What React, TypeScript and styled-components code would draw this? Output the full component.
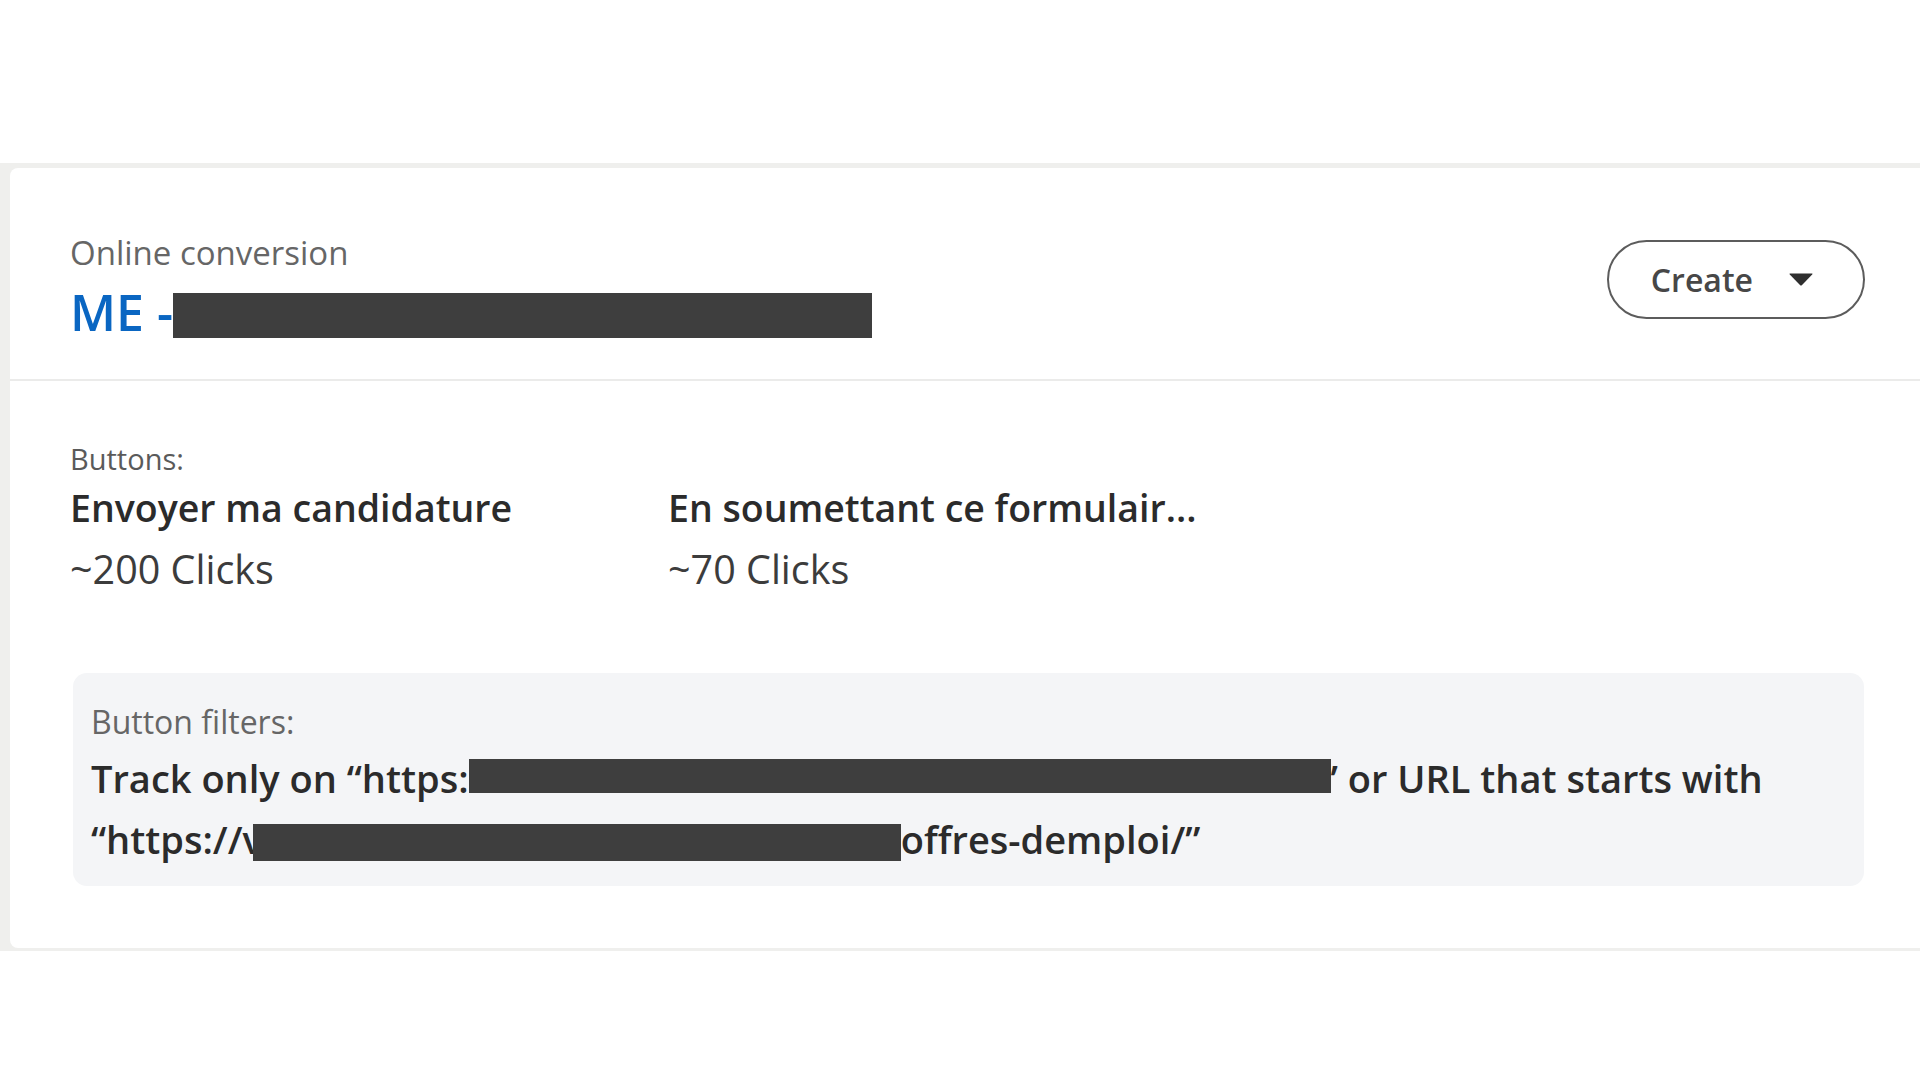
import React from "react";
import styled, { createGlobalStyle } from "styled-components";

const GlobalStyle = createGlobalStyle`
  html, body { margin: 0; padding: 0; background: #ffffff; }
  body { font-family: "Open Sans", "Noto Sans", sans-serif; color: #2e2e2e; }
  * { box-sizing: border-box; }
`;

const Page = styled.div`
  width: 1920px;
  height: 1080px;
  padding-top: 163px;
  background: #ffffff;
  overflow: hidden;
`;

const Frame = styled.div`
  background: #efefed;
  padding: 5px 0 3px 10px;
`;

const Card = styled.section`
  background: #ffffff;
  border-radius: 8px 0 0 8px;
  height: 780px;
  display: flex;
  flex-direction: column;
`;

const Header = styled.header`
  display: flex;
  justify-content: space-between;
  align-items: flex-start;
  padding: 63px 55px 35px 60px;
  border-bottom: 2px solid #ebebea;
`;

const TitleBlock = styled.div`
  display: flex;
  flex-direction: column;
`;

const Eyebrow = styled.div`
  font-size: 33px;
  line-height: 44px;
  color: #666666;
  font-weight: 400;
`;

const Title = styled.h1`
  margin: 5px 0 0;
  font-size: 50px;
  line-height: 64px;
  font-weight: 600;
  color: #0a66c2;
  white-space: nowrap;
`;

const Redacted = styled.span<{ $w: number; $h: number; $shift: number; $overlap?: number }>`
  display: inline-block;
  width: ${(p) => p.$w}px;
  height: ${(p) => p.$h}px;
  margin-left: ${(p) => -(p.$overlap ?? 0)}px;
  background: #3e3e3e;
  vertical-align: ${(p) => p.$shift}px;
`;

const CreateButton = styled.button`
  margin-top: 9px;
  display: flex;
  align-items: center;
  gap: 36px;
  height: 79px;
  padding: 0 50px 0 42px;
  border: 2px solid #5c5c5c;
  border-radius: 999px;
  background: #ffffff;
  font-family: "Open Sans", "Noto Sans", sans-serif;
  font-size: 32px;
  font-weight: 600;
  color: #474747;
  cursor: pointer;
  svg { display: block; }
`;

const Body = styled.div`
  padding: 58px 56px 0 60px;
  display: flex;
  flex-direction: column;
`;

const SectionLabel = styled.div`
  font-size: 29px;
  line-height: 40px;
  color: #5a5a5a;
`;

const ButtonsGrid = styled.div`
  display: grid;
  grid-template-columns: 598px auto;
  margin-top: 4px;
`;

const ButtonStat = styled.div`
  display: flex;
  flex-direction: column;
  gap: 11px;
`;

const ButtonName = styled.div`
  font-size: 37.5px;
  line-height: 50px;
  font-weight: 600;
  color: #2b2b2b;
  white-space: nowrap;
`;

const Clicks = styled.div`
  font-size: 39.5px;
  line-height: 50px;
  font-weight: 400;
  color: #3c3c3c;
`;

const FilterBox = styled.div`
  margin: 79px 0 0 3px;
  background: #f4f5f7;
  border-radius: 14px;
  padding: 29px 18px 16px;
`;

const FilterLabel = styled.div`
  font-size: 32px;
  line-height: 40px;
  color: #666666;
`;

const FilterText = styled.p`
  margin: 6px 0 0;
  font-size: 38px;
  line-height: 61px;
  font-weight: 600;
  color: #2b2b2b;
`;

const Caret = () => (
  <svg width="24" height="13" viewBox="0 0 24 13" aria-hidden="true">
    <path d="M1 0.5 H23 Q24 0.5 23.2 1.4 L12.8 12.2 Q12 13 11.2 12.2 L0.8 1.4 Q0 0.5 1 0.5 Z" fill="#2f2f2f" />
  </svg>
);

const buttons = [
  { name: "Envoyer ma candidature", clicks: "~200 Clicks" },
  { name: "En soumettant ce formulair...", clicks: "~70 Clicks" },
];

export default function App() {
  return (
    <>
      <GlobalStyle />
      <Page>
        <Frame>
          <Card>
            <Header>
              <TitleBlock>
                <Eyebrow>Online conversion</Eyebrow>
                <Title>
                  ME -<Redacted $w={699} $h={45} $shift={-7} />
                </Title>
              </TitleBlock>
              <CreateButton>
                Create
                <Caret />
              </CreateButton>
            </Header>
            <Body>
              <SectionLabel>Buttons:</SectionLabel>
              <ButtonsGrid>
                {buttons.map((b) => (
                  <ButtonStat key={b.name}>
                    <ButtonName>{b.name}</ButtonName>
                    <Clicks>{b.clicks}</Clicks>
                  </ButtonStat>
                ))}
              </ButtonsGrid>
              <FilterBox>
                <FilterLabel>Button filters:</FilterLabel>
                <FilterText>
                  Track only on “https:<Redacted $w={862} $h={34} $shift={0} />’ or URL that starts with
                  <br />
                  “https://v<Redacted $w={648} $h={37} $shift={-7} $overlap={10} />offres-demploi/”
                </FilterText>
              </FilterBox>
            </Body>
          </Card>
        </Frame>
      </Page>
    </>
  );
}
